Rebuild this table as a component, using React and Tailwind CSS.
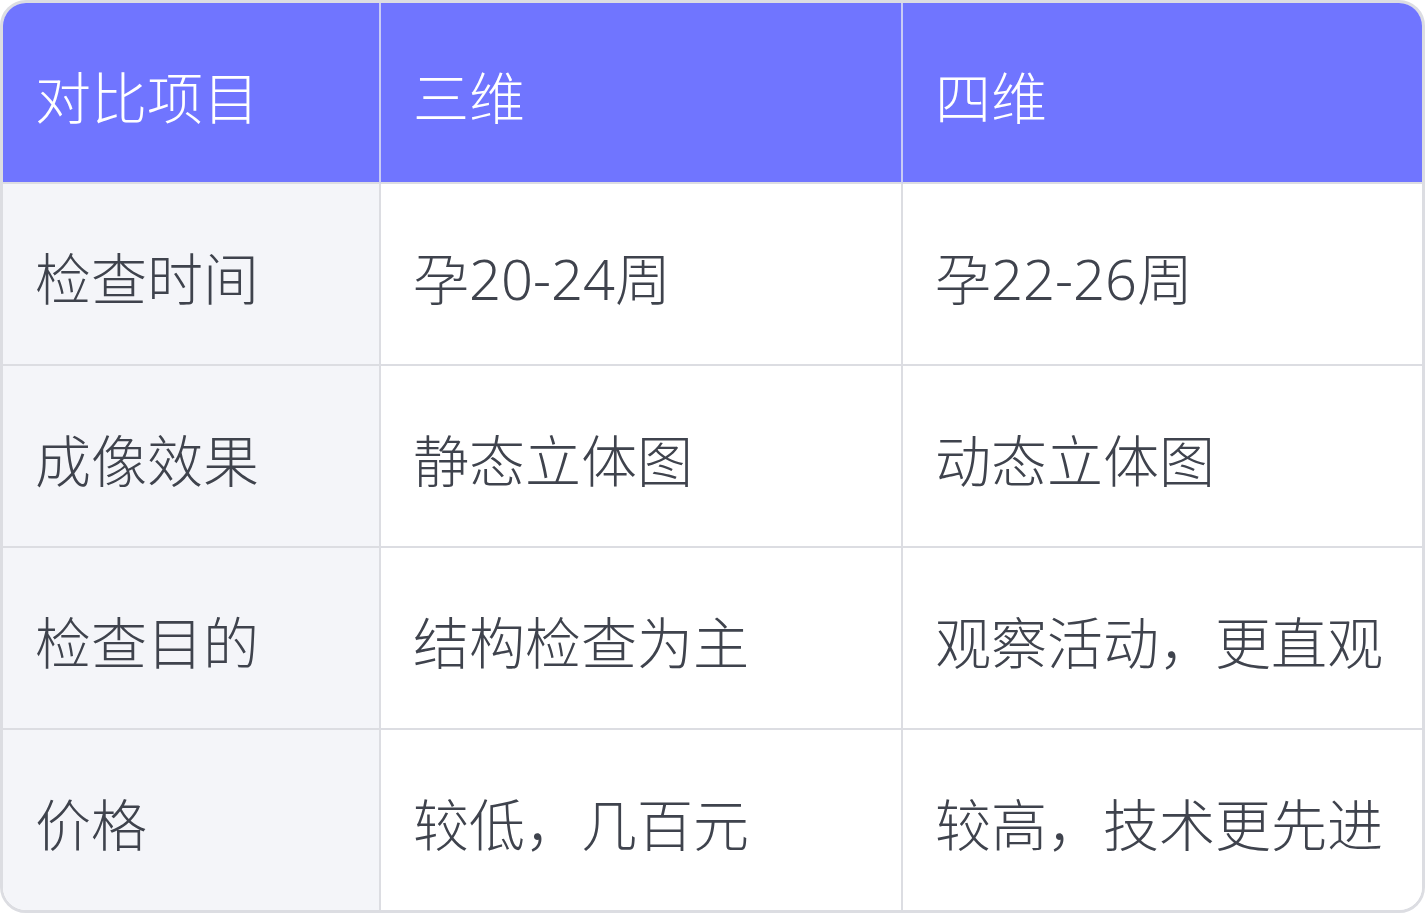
export default function App() {
  const rows = [
    ["检查时间", "孕20-24周", "孕22-26周"],
    ["成像效果", "静态立体图", "动态立体图"],
    ["检查目的", "结构检查为主", "观察活动，更直观"],
    ["价格", "较低，几百元", "较高，技术更先进"],
  ];
  const font = { fontFamily: '"Noto Sans", "Noto Sans CJK SC", sans-serif' };
  return (
    <div className="w-[1425px] h-[913px] bg-white">
      <div
        className="w-[1425px] h-[913px] border-[3px] border-[#dcdde2] rounded-[26px] overflow-hidden grid grid-cols-[378px_522px_1fr] grid-rows-[181px_182px_182px_182px_1fr] font-light text-[56px] leading-none"
        style={font}
      >
        <div className="bg-[#7075ff] text-white border-r-2 border-b-2 border-r-[#c9cbf5] border-b-[#dcdde2] flex items-center pl-[32px] pt-[8px]">对比项目</div>
        <div className="bg-[#7075ff] text-white border-r-2 border-b-2 border-r-[#c9cbf5] border-b-[#dcdde2] flex items-center pl-[32px] pt-[8px]">三维</div>
        <div className="bg-[#7075ff] text-white border-b-2 border-b-[#dcdde2] flex items-center pl-[32px] pt-[8px]">四维</div>
        {rows.map((r, i) => {
          const last = i === rows.length - 1;
          const bb = last ? "" : "border-b-2";
          return [
            <div key={i + "a"} className={`bg-[#f4f5f9] text-[#3f434d] border-r-2 ${bb} border-[#dcdde2] flex items-center pl-[32px] pt-[8px]`}>{r[0]}</div>,
            <div key={i + "b"} className={`bg-white text-[#3f434d] border-r-2 ${bb} border-[#dcdde2] flex items-center pl-[32px] pt-[8px]`}>{r[1]}</div>,
            <div key={i + "c"} className={`bg-white text-[#3f434d] ${bb} border-[#dcdde2] flex items-center pl-[32px] pt-[8px]`}>{r[2]}</div>,
          ];
        })}
      </div>
    </div>
  );
}
